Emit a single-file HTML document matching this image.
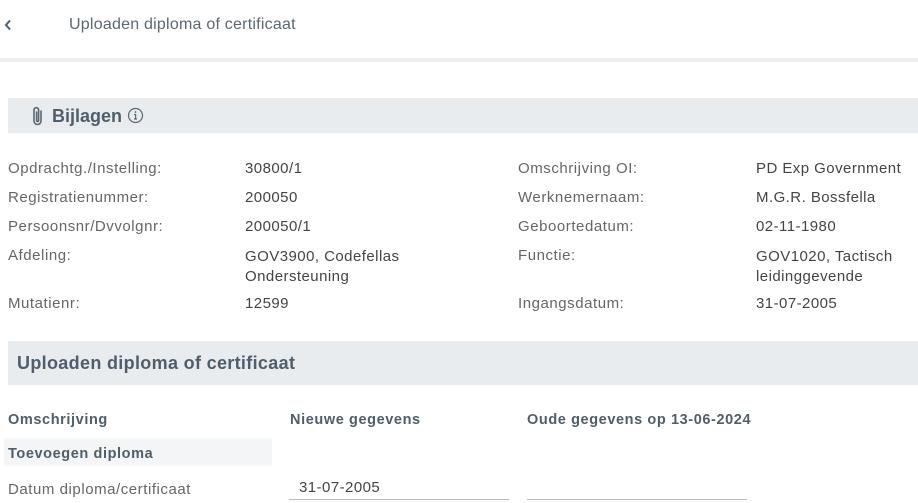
<!DOCTYPE html>
<html><head><meta charset="utf-8"><style>
*{margin:0;padding:0;box-sizing:border-box}
body{width:918px;height:503px;overflow:hidden;background:#fff;font-family:"Liberation Sans",sans-serif;position:relative}
.a{position:absolute;white-space:nowrap}
.l{color:#666;font-size:15px;letter-spacing:0.55px}
.v{color:#444;font-size:15px;letter-spacing:0.45px}
.h{color:#4f5e6a;font-weight:bold;font-size:14.5px;letter-spacing:0.6px}
</style></head><body>
<svg class="a" style="left:4px;top:19px" width="8" height="12" viewBox="0 0 8 12"><path d="M6 1.5L2 6l4 4.5" fill="none" stroke="#4f5e6a" stroke-width="2"/></svg>
<div class="a" style="left:69px;top:16px;font-size:16px;color:#5a6872;letter-spacing:0.23px">Uploaden diploma of certificaat</div>
<div class="a" style="left:0;top:58px;width:918px;height:4px;background:#eceef0"></div>
<div class="a" style="left:8px;top:98px;width:910px;height:35px;background:#e9ecef"></div>
<svg class="a" style="left:31px;top:105px" width="14" height="22" viewBox="0 0 14 22"><path d="M10 6v10a3.5 3.5 0 0 1-7 0V5a2.3 2.3 0 0 1 4.6 0v10.5a1 1 0 0 1-2 0V7" fill="none" stroke="#5a6872" stroke-width="1.6" stroke-linecap="round"/></svg>
<div class="a" style="left:52px;top:106px;font-size:18px;font-weight:bold;color:#4f5e6a">Bijlagen</div>
<svg class="a" style="left:127px;top:107px" width="17" height="17" viewBox="0 0 17 17"><circle cx="8.5" cy="8.5" r="7" fill="none" stroke="#5a6872" stroke-width="1.2"/><circle cx="8.5" cy="5" r="0.9" fill="#5a6872"/><path d="M7 7.5h1.6v4.5M7 12h3" stroke="#5a6872" stroke-width="1.2" fill="none"/></svg>

<div class="a l" style="left:8px;top:160px">Opdrachtg./Instelling:</div>
<div class="a v" style="left:245px;top:160px">30800/1</div>
<div class="a l" style="left:8px;top:189px">Registratienummer:</div>
<div class="a v" style="left:245px;top:189px">200050</div>
<div class="a l" style="left:8px;top:218px">Persoonsnr/Dvvolgnr:</div>
<div class="a v" style="left:245px;top:218px">200050/1</div>
<div class="a l" style="left:8px;top:247px">Afdeling:</div>
<div class="a v" style="left:245px;top:247px;line-height:20px">GOV3900, Codefellas<br>Ondersteuning</div>
<div class="a l" style="left:8px;top:295px">Mutatienr:</div>
<div class="a v" style="left:245px;top:295px">12599</div>

<div class="a l" style="left:518px;top:160px">Omschrijving OI:</div>
<div class="a v" style="left:756px;top:160px">PD Exp Government</div>
<div class="a l" style="left:518px;top:189px">Werknemernaam:</div>
<div class="a v" style="left:756px;top:189px">M.G.R. Bossfella</div>
<div class="a l" style="left:518px;top:218px">Geboortedatum:</div>
<div class="a v" style="left:756px;top:218px">02-11-1980</div>
<div class="a l" style="left:518px;top:247px">Functie:</div>
<div class="a v" style="left:756px;top:247px;line-height:20px">GOV1020, Tactisch<br>leidinggevende</div>
<div class="a l" style="left:518px;top:295px">Ingangsdatum:</div>
<div class="a v" style="left:756px;top:295px">31-07-2005</div>

<div class="a" style="left:8px;top:341px;width:910px;height:44px;background:#e9ecef"></div>
<div class="a" style="left:17px;top:353px;font-size:18px;font-weight:bold;color:#4f5e6a;letter-spacing:0.33px">Uploaden diploma of certificaat</div>

<div class="a h" style="left:8px;top:412px">Omschrijving</div>
<div class="a h" style="left:290px;top:412px">Nieuwe gegevens</div>
<div class="a h" style="left:527px;top:412px">Oude gegevens op 13-06-2024</div>
<div class="a" style="left:4px;top:438px;width:268px;height:28px;background:#f4f5f7"></div>
<div class="a h" style="left:8px;top:446px">Toevoegen diploma</div>
<div class="a l" style="left:8px;top:481px">Datum diploma/certificaat</div>
<div class="a v" style="left:299px;top:479px">31-07-2005</div>
<div class="a" style="left:289px;top:499px;width:220px;height:1px;background:#b8c0c6"></div>
<div class="a" style="left:527px;top:499px;width:220px;height:1px;background:#b8c0c6"></div>
</body></html>
